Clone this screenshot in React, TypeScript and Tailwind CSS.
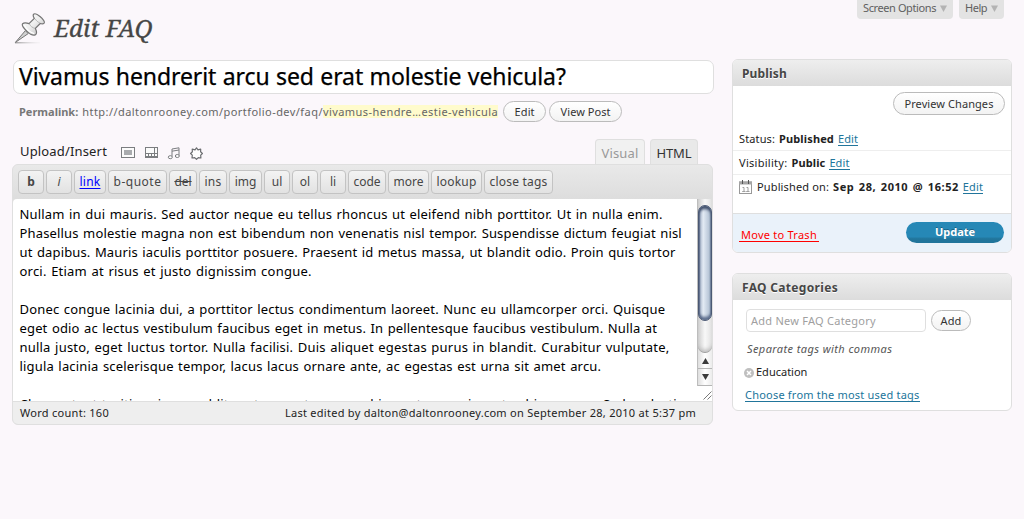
import type { ReactNode } from 'react';

const paragraphLines: { text: string; tracking: string }[] = [
  { text: 'Nullam in dui mauris. Sed auctor neque eu tellus rhoncus ut eleifend nibh porttitor. Ut in nulla enim.', tracking: 'tracking-[0.177px]' },
  { text: 'Phasellus molestie magna non est bibendum non venenatis nisl tempor. Suspendisse dictum feugiat nisl', tracking: 'tracking-[0.157px]' },
  { text: 'ut dapibus. Mauris iaculis porttitor posuere. Praesent id metus massa, ut blandit odio. Proin quis tortor', tracking: 'tracking-[0.147px]' },
  { text: 'orci. Etiam at risus et justo dignissim congue.', tracking: 'tracking-[0.22px]' },
  { text: '', tracking: '' },
  { text: 'Donec congue lacinia dui, a porttitor lectus condimentum laoreet. Nunc eu ullamcorper orci. Quisque', tracking: 'tracking-[0.175px]' },
  { text: 'eget odio ac lectus vestibulum faucibus eget in metus. In pellentesque faucibus vestibulum. Nulla at', tracking: 'tracking-[0.155px]' },
  { text: 'nulla justo, eget luctus tortor. Nulla facilisi. Duis aliquet egestas purus in blandit. Curabitur vulputate,', tracking: 'tracking-[0.212px]' },
  { text: 'ligula lacinia scelerisque tempor, lacus lacus ornare ante, ac egestas est urna sit amet arcu.', tracking: 'tracking-[0.172px]' },
  { text: '', tracking: '' },
  { text: 'Class aptent taciti sociosqu ad litora torquent per conubia nostra, per inceptos himenaeos. Sed molestie', tracking: 'tracking-[0.18px]' },
];

const quickTags: { label: string; className: string }[] = [
  { label: 'b', className: 'w-[26px] font-bold text-[#464646]' },
  { label: 'i', className: 'w-[26px] italic text-[#464646]' },
  { label: 'link', className: 'w-[32px] text-[#0000ff] underline underline-offset-2 tracking-[0.24px]' },
  { label: 'b-quote', className: 'w-[59px] tracking-[0.5px] text-[#464646]' },
  { label: 'del', className: 'w-[28px] line-through text-[#464646]' },
  { label: 'ins', className: 'w-[28px] tracking-[0.2px] text-[#464646]' },
  { label: 'img', className: 'w-[33px] text-[#464646]' },
  { label: 'ul', className: 'w-[26px] text-[#464646]' },
  { label: 'ol', className: 'w-[26px] text-[#464646]' },
  { label: 'li', className: 'w-[26px] text-[#464646]' },
  { label: 'code', className: 'w-[38px] text-[#464646]' },
  { label: 'more', className: 'w-[41px] text-[#464646]' },
  { label: 'lookup', className: 'w-[51px] tracking-[0.2px] text-[#464646]' },
  { label: 'close tags', className: 'w-[69px] tracking-[0.2px] text-[#464646]' },
];

function PinIcon() {
  return (
    <svg width="34" height="34" viewBox="0 0 34 34" className="shrink-0">
      <defs>
        <linearGradient id="pin" x1="0" y1="0" x2="1" y2="1">
          <stop offset="0" stopColor="#ffffff" />
          <stop offset="0.5" stopColor="#eeeeee" />
          <stop offset="1" stopColor="#b4b4b4" />
        </linearGradient>
        <linearGradient id="pinShadow" x1="0" y1="0" x2="1" y2="0">
          <stop offset="0" stopColor="#777777" />
          <stop offset="1" stopColor="#dddddd" stopOpacity="0.2" />
        </linearGradient>
      </defs>
      <rect x="3" y="30.3" width="25" height="1" fill="url(#pinShadow)" />
      <path d="M13.4 18.6L3.4 30.4L16.2 21.6Z" fill="#d0d0d0" stroke="#777" strokeWidth="1" strokeLinejoin="round" />
      <path
        d="M21.6 2.2C22.8 1.1 25.4 2.3 28.3 4.8C31.2 7.4 33 9.8 32.1 11.1C31.3 12 29.7 12 28.2 11.5L23.4 16.4C24.6 19 25 21.9 23.2 22.9C20.8 23.7 17.2 21.5 14.8 19.1C11.6 16 9.4 13.2 10.6 11.8C12 10.5 14.8 10.9 17 11.6L22.3 6.3C21.4 4.9 20.9 3.1 21.6 2.2Z"
        fill="url(#pin)"
        stroke="#747474"
        strokeWidth="1.2"
      />
      <path d="M23.2 6.9C24.3 8.8 25.9 10.1 27.9 11M17.4 12C18.4 14.2 20.6 15.8 23 16.4" fill="none" stroke="#b5b5b5" strokeWidth="1" />
      <path d="M12.3 13C14 16.6 18.2 20.4 22.2 21.6" fill="none" stroke="#ffffff" strokeWidth="1.2" />
    </svg>
  );
}

function MediaIcons() {
  return (
    <div className="flex items-start">
      <svg width="14" height="12" viewBox="0 0 14 12">
        <rect x="0.5" y="0.5" width="13" height="10" fill="#fbfbfb" stroke="#7b7d80" />
        <rect x="3" y="3" width="8" height="5" fill="#a9abae" />
      </svg>
      <svg width="13" height="12" viewBox="0 0 13 12" className="ml-[10px]">
        <rect x="0.5" y="0.5" width="12" height="10" fill="#fbfbfb" stroke="#7b7d80" />
        <path d="M0 6.5H13M3.5 7V11M6.5 7V11M9.5 7V11M9.5 1V6M0 9.5H13" stroke="#7b7d80" />
      </svg>
      <svg width="14" height="13" viewBox="0 0 14 13" className="ml-[9px]">
        <path d="M5 9.5V2L12 0.8V8.5M5 4.2L12 3" fill="none" stroke="#7b7d80" />
        <ellipse cx="3.3" cy="10.2" rx="2" ry="1.5" fill="#fff" stroke="#7b7d80" />
        <ellipse cx="10.3" cy="9" rx="2" ry="1.5" fill="#fff" stroke="#7b7d80" />
      </svg>
      <svg width="13" height="13" viewBox="0 0 13 13" className="ml-[9px]">
        <path
          d="M6.5 0.8L8 2.8L10.7 2.2L10.6 4.8L12.4 6.5L10.7 8.2L10.9 11L8.3 10.6L6.5 12.4L4.7 10.6L2 11L2.3 8.2L0.6 6.5L2.4 4.8L2.2 2.2L5 2.8Z"
          fill="#fdfdfd"
          stroke="#6c6e71"
          strokeWidth="1.2"
          strokeLinejoin="round"
        />
      </svg>
    </div>
  );
}

function PillButton({ children, className }: { children: ReactNode; className: string }) {
  return (
    <button
      className={`flex shrink-0 items-center justify-center whitespace-nowrap rounded-full border border-[#bbbbbb] bg-linear-to-b from-white to-[#f3f3f3] text-[11px] text-[#333333] ${className}`}
    >
      {children}
    </button>
  );
}

function EditLink() {
  return <a className="border-b border-[#21759b] leading-[12px] tracking-[0.1px] text-[#21759b]">Edit</a>;
}

function Panel({ title, tracking, className, children }: { title: string; tracking: string; className: string; children: ReactNode }) {
  return (
    <section className={`flex flex-col overflow-hidden rounded-[6px] border border-[#dfdfdf] bg-white ${className}`}>
      <h3
        className={`flex h-[26px] shrink-0 items-center bg-linear-to-b from-[#eeeeee] to-[#dcdcdc] pt-px pl-[9px] text-[12px] font-bold text-[#464646] [text-shadow:0_1px_0_#fff] ${tracking}`}
      >
        {title}
      </h3>
      {children}
    </section>
  );
}

function Scrollbar() {
  return (
    <div className="flex h-[187px] w-[15px] shrink-0 flex-col border-l border-[#bdbdbd] bg-linear-to-r from-[#dedede] via-white to-[#ececec]">
      <div className="h-[154px] rounded-b-[7px] border-b border-[#9d9d9d] bg-linear-to-r from-[#cfcfcf] via-[#f8f8f8] to-[#e2e2e2] pt-[6px] shadow-[inset_0_-4px_4px_-2px_#bbbbbb]">
        <div className="h-[116px] w-[14px] rounded-[7px] border border-[#4a5873] bg-linear-to-r from-[#98a6bd] via-[#e3ebf4] via-35% to-[#a9b9cd] shadow-[inset_0_4px_3px_-1px_#3f4e6b,inset_0_-4px_3px_-1px_#5d6e8d,inset_1px_0_1px_#6d7b96,inset_-1px_0_1px_#7e8da6]" />
      </div>
      <div className="flex h-[16px] items-center justify-center border-b border-[#b5b5b5]">
        <svg width="7" height="6" viewBox="0 0 7 6"><path d="M3.5 0L7 6H0Z" fill="#3a3a3a" /></svg>
      </div>
      <div className="flex h-[17px] items-center justify-center border-b border-[#b5b5b5]">
        <svg width="7" height="6" viewBox="0 0 7 6"><path d="M0 0H7L3.5 6Z" fill="#3a3a3a" /></svg>
      </div>
    </div>
  );
}

function ScreenTabs() {
  const base = 'flex h-[19px] items-center gap-[4px] rounded-b-[4px] bg-[#e3e3e3] pb-[3px] pl-[6px] text-[11px] text-[#606060]';
  return (
    <div className="flex h-[59px] items-start gap-[6px] pl-[125px]">
      <div className={`${base} w-[96px]`}>
        <span className="tracking-[-0.4px] whitespace-nowrap">Screen Options</span>
        <svg width="7" height="7" viewBox="0 0 7 7" className="shrink-0"><path d="M0 0.5H7L3.5 7Z" fill="#b3b3b3" /></svg>
      </div>
      <div className={`${base} w-[45px]`}>
        <span className="tracking-[-0.45px]">Help</span>
        <svg width="7" height="7" viewBox="0 0 7 7" className="shrink-0"><path d="M0 0.5H7L3.5 7Z" fill="#b3b3b3" /></svg>
      </div>
    </div>
  );
}

function Editor() {
  return (
    <div className="flex w-[701px] flex-col">
      <div className="flex h-[25px] items-start pl-[8px]">
        <span className="pt-[4px] text-[13px] leading-[17px] tracking-[0.16px] text-[#222222]">Upload/Insert</span>
        <div className="ml-[14px] pt-[8px]">
          <MediaIcons />
        </div>
        <div className="ml-auto flex gap-[5px] pr-[15px]">
          <div className="flex h-[25px] w-[50px] items-center justify-center rounded-t-[4px] border border-b-0 border-[#dfdfdf] bg-[#f1f1f1] pt-[3px] text-[13px] tracking-[0.16px] text-[#999999]">
            Visual
          </div>
          <div className="flex h-[25px] w-[48px] items-center justify-center rounded-t-[4px] border border-b-0 border-[#dfdfdf] bg-[#e9e9e9] pt-[3px] text-[13px] tracking-[-0.1px] text-[#333333]">
            HTML
          </div>
        </div>
      </div>
      <div className="flex h-[261px] flex-col overflow-hidden rounded-[6px] border border-[#dfdfdf] bg-[#dfdfdf]">
        <div className="flex h-[34px] shrink-0 gap-[2px] bg-linear-to-b from-[#e9e9e9] to-[#dddddd] pt-[5px] pl-[5px]">
          {quickTags.map((tag) => (
            <button
              key={tag.label}
              className={`flex h-[24px] shrink-0 items-center justify-center whitespace-nowrap rounded-[4px] border border-[#c3c3c3] bg-linear-to-b from-[#f3f3f3] to-[#e2e2e2] pb-px text-[12px] ${tag.className}`}
            >
              {tag.label}
            </button>
          ))}
        </div>
        <div className="relative flex h-[202px] shrink-0 justify-between overflow-hidden rounded-tl-[4px] bg-white">
          <div className="pt-[6px] pl-[6.5px] text-[13px] leading-[19px] whitespace-nowrap text-black [word-spacing:0.9px]">
            {paragraphLines.map((line, index) => (
              <p key={index} className={`h-[19px] ${line.tracking}`}>
                {line.text}
              </p>
            ))}
          </div>
          <Scrollbar />
          <svg width="9" height="9" viewBox="0 0 9 9" className="absolute right-0 bottom-px">
            <path d="M0.5 8.5L8.5 0.5M4.5 8.5L8.5 4.5" stroke="#6a6a6a" strokeWidth="0.9" />
          </svg>
        </div>
        <div className="flex h-[23px] shrink-0 items-center justify-between border-t border-[#dfdfdf] bg-[#eeeeee] pr-[16px] pl-[7px] text-[11px] text-[#222222]">
          <span className="tracking-[0.28px]">Word count: 160</span>
          <span className="tracking-[0.27px]">Last edited by dalton@daltonrooney.com on September 28, 2010 at 5:37 pm</span>
        </div>
      </div>
    </div>
  );
}

export default function App() {
  return (
    <div className="flex h-[519px] w-[1024px] justify-between overflow-hidden bg-[#fbf7fb] pr-[12px] pl-[12px] font-['Noto_Sans',sans-serif]">
      <main className="flex w-[702px] flex-col">
        <header className="flex h-[60px] items-start pt-[12px]">
          <PinIcon />
          <h1 className="ml-[8px] font-['Noto_Serif','Liberation_Serif',serif] text-[24px] leading-[32px] tracking-[0.1px] italic text-[#464646] [-webkit-text-stroke:0.35px_#464646] [text-shadow:0_1px_0_#fff]">
            Edit FAQ
          </h1>
        </header>
        <div className="ml-px flex h-[34px] items-center rounded-[7px] border border-[#dfdfdf] bg-white pb-px pl-[5px] text-[23px] tracking-[-0.1px] text-black [-webkit-text-stroke:0.25px_#000] [word-spacing:0.6px]">
          Vivamus hendrerit arcu sed erat molestie vehicula?
        </div>
        <div className="flex h-[45px] items-start pt-[7px] pl-[7px] text-[11px] leading-[21px] text-[#666666]">
          <strong className="text-[#777777]">Permalink:</strong>
          <span className="ml-[4px] tracking-[0.44px]">http://daltonrooney.com/portfolio-dev/faq/</span>
          <span className="mt-[4px] bg-[#fffbcc] leading-[13px] tracking-[0.44px]">vivamus-hendre…estie-vehicula</span>
          <PillButton className="ml-[5px] h-[21px] w-[43px] tracking-[0.1px]">Edit</PillButton>
          <PillButton className="ml-[3px] h-[21px] w-[73px] tracking-[0.06px]">View Post</PillButton>
        </div>
        <Editor />
      </main>

      <aside className="flex w-[280px] flex-col">
        <ScreenTabs />
        <Panel title="Publish" tracking="tracking-[0.17px]" className="h-[194px]">
          <div className="flex h-[41px] shrink-0 justify-end pt-[6px] pr-[6px]">
            <PillButton className="h-[23px] w-[112px] pt-px tracking-[0.08px]">Preview Changes</PillButton>
          </div>
          <div className="flex h-[24px] shrink-0 items-center border-b border-[#eeeeee] pt-[2px] pl-[6px] text-[11px] text-[#222222]">
            <span className="tracking-[0.12px]">Status:</span>
            <b className="mr-[4px] ml-[4px] tracking-[0.14px]">Published</b>
            <EditLink />
          </div>
          <div className="flex h-[24px] shrink-0 items-center border-b border-[#eeeeee] pt-[2px] pl-[6px] text-[11px] text-[#222222]">
            <span className="tracking-[0.28px]">Visibility:</span>
            <b className="mr-[4px] ml-[4px] tracking-[0.13px]">Public</b>
            <EditLink />
          </div>
          <div className="flex h-[24px] shrink-0 items-center pt-px pl-[6px] text-[11px] text-[#222222]">
            <svg width="13" height="14" viewBox="0 0 13 14" className="mr-[5px] mb-[2px] shrink-0">
              <rect x="0.5" y="2" width="12" height="11.5" fill="#fff" stroke="#999" />
              <rect x="0" y="1.5" width="13" height="3" fill="#a5a5a5" />
              <path d="M3.5 0V4M9.5 0V4" stroke="#555" />
              <path d="M3.5 7.5H5V11M3.2 11.5H6.5M7.5 7.5H9V11M7.2 11.5H10.5" fill="none" stroke="#a0a0a0" />
            </svg>
            <span className="tracking-[0.14px]">Published on:</span>
            <b className="mr-[4px] ml-[4px] tracking-[0.55px] whitespace-nowrap [word-spacing:1.2px]">Sep 28, 2010 @ 16:52</b>
            <EditLink />
          </div>
          <div className="mt-auto flex h-[39px] shrink-0 items-center justify-between border-t border-[#dfdfdf] bg-[#eaf2fa] pr-[7px] pb-[2px] pl-[6px]">
            <a className="mt-[5px] border-b border-[#ff0000] px-[2px] text-[11px] leading-[13px] tracking-[0.25px] text-[#ff0000]">Move to Trash</a>
            <button className="flex h-[21px] w-[98px] items-center justify-center rounded-full bg-linear-to-b from-[#2688b6] from-70% to-[#21759b] to-80% pt-px text-[11px] font-bold text-white [text-shadow:0_-1px_0_rgba(0,0,0,0.3)]">
              Update
            </button>
          </div>
        </Panel>
        <Panel title="FAQ Categories" tracking="tracking-[0.32px]" className="mt-[20px] h-[138px]">
          <div className="flex h-[41px] shrink-0 items-start pt-[9px] pl-[13px]">
            <div className="flex h-[23px] w-[180px] items-center rounded-[4px] border border-[#dfdfdf] bg-white pt-px pl-[4px] text-[11px] tracking-[0.25px] text-[#a0a0a0]">
              Add New FAQ Category
            </div>
            <PillButton className="mt-px ml-[5px] h-[21px] w-[40px] pt-px tracking-[0.15px]">Add</PillButton>
          </div>
          <p className="pl-[14px] text-[11px] leading-[16px] tracking-[0.41px] italic text-[#555555]">Separate tags with commas</p>
          <div className="mt-[7px] flex h-[16px] items-center pl-[11px] text-[11px] text-[#222222]">
            <svg width="10" height="10" viewBox="0 0 10 10" className="mt-px mr-[2px]">
              <circle cx="5" cy="5" r="5" fill="#bfbfbf" />
              <path d="M3 3L7 7M7 3L3 7" stroke="#fff" strokeWidth="1.5" />
            </svg>
            Education
          </div>
          <a className="mt-[9px] ml-[12px] self-start border-b border-[#21759b] text-[11px] leading-[12px] tracking-[0.21px] text-[#21759b]">
            Choose from the most used tags
          </a>
        </Panel>
      </aside>
    </div>
  );
}
